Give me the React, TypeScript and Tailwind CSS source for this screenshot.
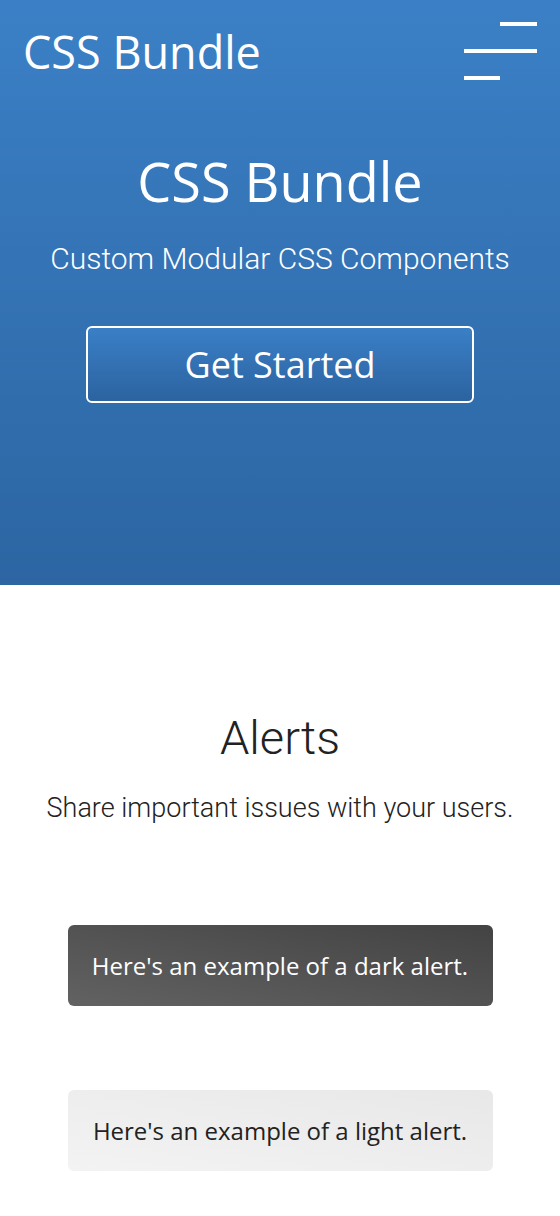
import "react";

function MenuIcon() {
	return (
		<button className="mt-[22px] flex w-[73px] flex-col items-end gap-[23px]" aria-label="menu">
			<span className="block h-[4px] w-[37px] bg-white" />
			<span className="block h-[4px] w-[73px] bg-white" />
			<span className="block h-[4px] w-[36px] self-start bg-white" />
		</button>
	);
}

function Alert({ dark, text }: { dark?: boolean; text: string }) {
	return (
		<div
			className={`flex h-[81px] w-[425px] items-center justify-center rounded-md font-['Open_Sans',sans-serif] text-[24px] ${
				dark
					? "bg-gradient-to-tr from-[#626262] to-[#434343] text-white"
					: "bg-gradient-to-tr from-[#f3f3f3] to-[#e8e8e8] text-[#222]"
			}`}
		>
			{text}
		</div>
	);
}

export default function App() {
	return (
		<div className="min-h-[1216px] w-[560px] bg-white">
			{/* hero */}
			<header className="h-[585px] bg-gradient-to-b from-[#3b80c6] to-[#2c65a2] text-white">
				<nav className="flex items-start justify-between px-[23px]">
					<h2 className="mt-[29px] font-['Open_Sans',sans-serif] text-[45px] leading-none">
						CSS Bundle
					</h2>
					<MenuIcon />
				</nav>

				<div className="flex flex-col items-center">
					<h1 className="mt-[74px] font-['Open_Sans',sans-serif] text-[54px] leading-none">
						CSS Bundle
					</h1>
					<p className="mt-[36px] font-['Roboto',sans-serif] text-[30px] font-light leading-none">
						Custom Modular CSS Components
					</p>
					<button className="mt-[52px] flex h-[77px] w-[388px] items-center justify-center rounded-md border-2 border-white bg-gradient-to-b from-[#3a7fc6] to-[#2c63a0] font-['Open_Sans',sans-serif] text-[36px] leading-none">
						Get Started
					</button>
				</div>
			</header>

			{/* alerts */}
			<section className="flex flex-col items-center pb-[45px] text-[#222]">
				<h2 className="mt-[129px] font-['Roboto',sans-serif] text-[47px] font-light leading-none">
					Alerts
				</h2>
				<p className="mt-[34px] font-['Roboto',sans-serif] text-[27px] font-light leading-none">
					Share important issues with your users.
				</p>
				<div className="mt-[103px] flex flex-col items-center gap-[84px]">
					<Alert dark text="Here's an example of a dark alert." />
					<Alert text="Here's an example of a light alert." />
				</div>
			</section>
		</div>
	);
}
